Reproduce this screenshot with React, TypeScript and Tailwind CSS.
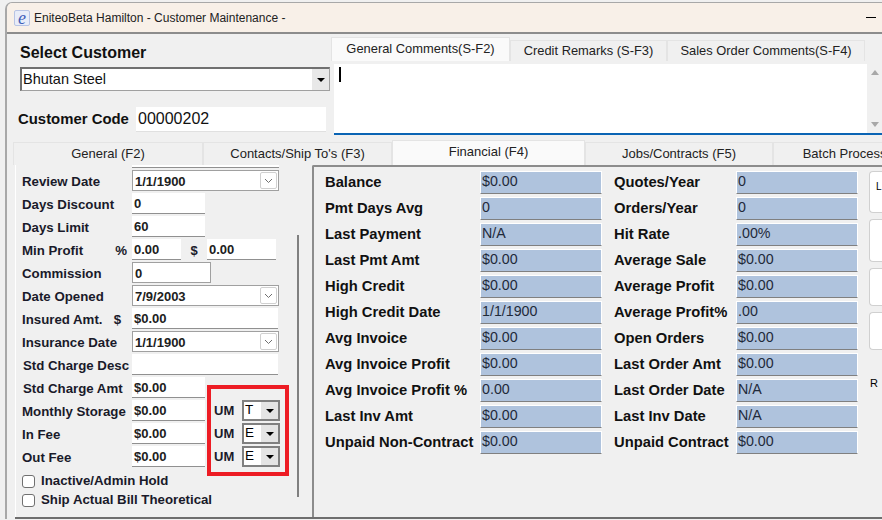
const sans = "font-['Liberation_Sans',Arial,sans-serif]";

function Caret({ className = "" }: { className?: string }) {
  return <div className={`h-0 w-0 border-x-[4px] border-t-[4px] border-x-transparent border-t-black ${className}`} />;
}

function DateBox({ value }: { value: string }) {
  return (
    <div className="flex h-[21px] w-[147px] items-center justify-between border border-[#a0a0a0] bg-white pl-[2px] pr-[1px] text-[13px] font-bold text-[#202020]">
      <span className="pt-[2px]">{value}</span>
      <div className="flex h-[17px] w-[17px] items-center justify-center rounded-[2px] border border-[#d0d0d0] bg-white">
        <svg width="9" height="6" viewBox="0 0 9 6"><path d="M1 1l3.5 3.5L8 1" fill="none" stroke="#707070" strokeWidth="1" /></svg>
      </div>
    </div>
  );
}

function TextBox({ value = "", w }: { value?: string; w: string }) {
  return (
    <div className={`flex h-[21px] items-center border-b border-[#909090] bg-white pl-[2px] pt-[2px] text-[13px] font-bold text-[#202020] ${w}`}>
      {value}
    </div>
  );
}

function Label({ children, indent = false }: { children: React.ReactNode; indent?: boolean }) {
  return (
    <span className={`whitespace-nowrap text-[13.25px] font-bold text-[#1a1a2a] ${indent ? "pl-[1px]" : ""}`}>{children}</span>
  );
}

function UM({ value }: { value: string }) {
  return (
    <div className="ml-[9px] flex items-center">
      <span className="w-[28px] text-[13px] font-bold text-[#1a1a2a]">UM</span>
      <div className="flex h-[21px] w-[38px] items-center justify-between border-2 border-[#808080] bg-white pl-[1px] text-[13.5px] text-black">
        <span>{value}</span>
        <div className="flex h-full w-[17px] items-center justify-center bg-[#e4e4e4]">
          <Caret />
        </div>
      </div>
    </div>
  );
}

const leftRows: { label: string; node: React.ReactNode }[] = [
  { label: "Review Date", node: <DateBox value="1/1/1900" /> },
  { label: "Days Discount", node: <TextBox value="0" w="w-[73px]" /> },
  { label: "Days Limit", node: <TextBox value="60" w="w-[73px]" /> },
];

const finLeft = [
  ["Balance", "$0.00"],
  ["Pmt Days Avg", "0"],
  ["Last Payment", "N/A"],
  ["Last Pmt Amt", "$0.00"],
  ["High Credit", "$0.00"],
  ["High Credit Date", "1/1/1900"],
  ["Avg Invoice", "$0.00"],
  ["Avg Invoice Profit", "$0.00"],
  ["Avg Invoice Profit %", "0.00"],
  ["Last Inv Amt", "$0.00"],
  ["Unpaid Non-Contract", "$0.00"],
];
const finRight = [
  ["Quotes/Year", "0"],
  ["Orders/Year", "0"],
  ["Hit Rate", ".00%"],
  ["Average Sale", "$0.00"],
  ["Average Profit", "$0.00"],
  ["Average Profit%", ".00"],
  ["Open Orders", "$0.00"],
  ["Last Order Amt", "$0.00"],
  ["Last Order Date", "N/A"],
  ["Last Inv Date", "N/A"],
  ["Unpaid Contract", "$0.00"],
];

function FinCol({ rows, labelW }: { rows: string[][]; labelW: string }) {
  return (
    <div className="flex flex-col gap-[4px]">
      {rows.map(([l, v]) => (
        <div key={l} className="flex h-[22px] items-center">
          <span className={`whitespace-nowrap text-[14.75px] font-bold text-[#111] ${labelW}`}>{l}</span>
          <div className="flex h-[23px] w-[122px] items-center border-y border-b-[#808080] border-t-white border-x border-x-white bg-[#afc3dd] pl-[1px] text-[14.25px] text-[#1f2a3a]">
            {v}
          </div>
        </div>
      ))}
    </div>
  );
}

function TopTab({ children, w, active = false }: { children: React.ReactNode; w: string; active?: boolean }) {
  return (
    <div
      className={`flex items-center justify-center whitespace-nowrap border border-b-0 border-[#e4e4e4] text-[12.9px] text-[#222] ${w} ${
        active ? "h-[24px] bg-[#fafafa] pb-[2px]" : "h-[21px] bg-[#f0f0f0]"
      }`}
    >
      {children}
    </div>
  );
}

function MainTab({ children, w, active = false }: { children: React.ReactNode; w: string; active?: boolean }) {
  return (
    <div
      className={`flex shrink-0 items-center justify-center whitespace-nowrap border border-b-0 border-[#e4e4e4] text-[13px] text-[#222] ${w} ${
        active ? "h-[25px] bg-[#fafafa] pb-[2px]" : "h-[23px] bg-[#f0f0f0]"
      }`}
    >
      {children}
    </div>
  );
}

export default function App() {
  return (
    <div className={`h-[520px] w-[882px] overflow-hidden bg-[#f0f0f0] pl-[5px] pt-[2px] ${sans}`}>
      <div className="flex h-[517px] flex-col overflow-hidden rounded-tl-[7px] border-l-2 border-t border-[#a8a8a8] bg-[#f0f0f0]">
        {/* title bar */}
        <div className="flex h-[31px] shrink-0 items-center justify-between border-b-2 border-[#8c8c8c] bg-[#f8f0e8] pl-[7px] pr-[6px]">
          <div className="flex items-center gap-[4px]">
            <div className="flex h-[16px] w-[16px] items-center justify-center rounded-[2px] border border-[#b8c4e4] bg-[#e8ecf8] font-['Liberation_Serif',serif] text-[18px] italic leading-none text-[#3f5fb8]">
              e
            </div>
            <span className="text-[12px] text-[#222]">EniteoBeta Hamilton - Customer Maintenance -</span>
          </div>
          <div className="h-[1px] w-[10px] bg-black" />
        </div>

        {/* header */}
        <div className="flex h-[105px] shrink-0">
          <div className="w-[324px] shrink-0 pl-[13px]">
            <div className="mt-[10px] text-[16px] font-bold leading-[18px] text-[#111]">Select Customer</div>
            <div className="mt-[5px] flex h-[24px] w-[310px] items-center justify-between border border-[#a0a0a0] border-l-2 border-t-2 border-l-[#707070] border-t-[#707070] bg-white pl-[1px] text-[14.5px] text-[#111]">
              <span>Bhutan Steel</span>
              <div className="flex h-full w-[17px] items-center justify-center bg-[#e8e8e8]">
                <Caret />
              </div>
            </div>
            <div className="mt-[16px] flex items-center">
              <span className="ml-[-2px] w-[118px] text-[14.9px] font-bold text-[#111]">Customer Code</span>
              <div className="flex h-[25px] w-[190px] items-center border-b border-[#e0e0e0] bg-white pl-[2px] text-[16px] text-[#111]">
                00000202
              </div>
            </div>
          </div>
          <div className="flex min-w-0 flex-1 flex-col pt-[3px]">
            <div className="flex items-end">
              <TopTab w="w-[179px]" active>General Comments(S-F2)</TopTab>
              <TopTab w="w-[157px]">Credit Remarks (S-F3)</TopTab>
              <TopTab w="w-[198px]">Sales Order Comments(S-F4)</TopTab>
            </div>
            <div className="ml-[3px] mt-[3px] flex h-[71px] justify-between border-b-2 border-[#0a64b4] bg-white">
              <div className="ml-[5px] mt-[3px] h-[15px] w-[2px] bg-black" />
              <div className="flex w-[15px] flex-col items-center justify-between bg-[#f0f0f0] py-[6px]">
                <div className="h-0 w-0 border-x-[4px] border-b-[5px] border-x-transparent border-b-[#a8a8a8]" />
                <div className="h-0 w-0 border-x-[4px] border-t-[5px] border-x-transparent border-t-[#a8a8a8]" />
              </div>
            </div>
          </div>
        </div>

        {/* main tabs */}
        <div className="flex h-[26px] shrink-0 items-end overflow-hidden pl-[6px]">
          <MainTab w="w-[190px]">General (F2)</MainTab>
          <MainTab w="w-[189px]">Contacts/Ship To's (F3)</MainTab>
          <MainTab w="w-[193px]" active>Financial (F4)</MainTab>
          <MainTab w="w-[188px]">Jobs/Contracts (F5)</MainTab>
          <MainTab w="w-[188px]">Batch Processing (F6)</MainTab>
        </div>

        {/* body */}
        <div className="ml-[8px] flex min-h-0 flex-1 border-b-2 border-[#6e6e6e]">
          {/* left panel */}
          <div className="relative w-[276px] shrink-0 border-l border-white pl-[6px]">
            <div className="absolute left-[116px] top-0 h-[3px] w-[147px] border-b border-[#909090] bg-white" />
            <div className="flex flex-col gap-[2px] pt-[5px]">
              {leftRows.map((r) => (
                <div key={r.label} className="flex h-[21px] items-center">
                  <span className="w-[110px]"><Label>{r.label}</Label></span>
                  {r.node}
                </div>
              ))}
              <div className="flex h-[21px] items-center">
                <span className="flex w-[110px] justify-between pr-[5px] pt-[2px]"><Label>Min Profit</Label><Label>%</Label></span>
                <TextBox value="0.00" w="w-[49px]" />
                <span className="w-[26px] pt-[2px] text-center text-[13px] font-bold text-[#1a1a2a]">$</span>
                <TextBox value="0.00" w="w-[69px]" />
              </div>
              <div className="flex h-[21px] items-center">
                <span className="w-[110px]"><Label>Commission</Label></span>
                <div className="flex h-[21px] w-[79px] items-center border border-[#a0a0a0] bg-white pl-[2px] pt-[2px] text-[13px] font-bold text-[#202020]">0</div>
              </div>
              <div className="flex h-[21px] items-center">
                <span className="w-[110px]"><Label>Date Opened</Label></span>
                <DateBox value="7/9/2003" />
              </div>
              <div className="flex h-[21px] items-center">
                <span className="flex w-[110px] justify-between pr-[11px] pt-[2px]"><Label>Insured Amt.</Label><Label>$</Label></span>
                <TextBox value="$0.00" w="w-[146px]" />
              </div>
              <div className="flex h-[21px] items-center">
                <span className="w-[110px]"><Label>Insurance Date</Label></span>
                <DateBox value="1/1/1900" />
              </div>
              <div className="flex h-[21px] items-center">
                <span className="w-[110px]"><Label indent>Std Charge Desc</Label></span>
                <TextBox w="w-[146px]" />
              </div>
              <div className="flex h-[21px] items-center">
                <span className="w-[110px]"><Label indent>Std Charge Amt</Label></span>
                <TextBox value="$0.00" w="w-[73px]" />
              </div>
              {[["Monthly Storage", "T"], ["In Fee", "E"], ["Out Fee", "E"]].map(([l, u]) => (
                <div key={l} className="flex h-[21px] items-center">
                  <span className="w-[110px]"><Label>{l}</Label></span>
                  <TextBox value="$0.00" w="w-[73px]" />
                  <UM value={u} />
                </div>
              ))}
            </div>
            <div className="mt-[7px] flex flex-col gap-[5px]">
              {["Inactive/Admin Hold", "Ship Actual Bill Theoretical"].map((t) => (
                <label key={t} className="flex h-[14px] items-center gap-[6px]">
                  <span className="h-[13px] w-[13px] rounded-[3px] border border-[#707070] bg-white" />
                  <Label>{t}</Label>
                </label>
              ))}
            </div>
            {/* annotation */}
            <div className="absolute left-[191px] top-[220px] h-[91px] w-[82px] border-[4px] border-[#ed1c24]" />
            {/* scrollbar line */}
            <div className="absolute left-[281px] top-[70px] h-[262px] w-[2px] bg-[#808080]" />
          </div>

          {/* financial panel */}
          <div className="ml-[21px] flex min-w-0 flex-1 rounded-tl-[2px] border-l-2 border-t-2 border-[#8c8c8c] pb-[4px] pl-[11px] pt-[4px]">
            <div className="flex h-[340px] gap-[12px]">
              <FinCol rows={finLeft} labelW="w-[155px]" />
              <FinCol rows={finRight} labelW="w-[122px]" />
            </div>
            <div className="ml-[11px] flex flex-1 flex-col">
              <div className="flex h-[42px] rounded-l-[4px] border border-r-0 border-[#d0d0d0] bg-white pl-[6px] pt-[7px] text-[10px]">L</div>
              <div className="mt-[6px] h-[43px] rounded-l-[4px] border border-r-0 border-[#d0d0d0] bg-white" />
              <div className="mt-[6px] h-[38px] rounded-l-[4px] border border-r-0 border-[#d0d0d0] bg-white" />
              <div className="mt-[6px] h-[38px] rounded-l-[4px] border border-r-0 border-[#d0d0d0] bg-white" />
              <div className="mt-[25px] pl-[1px] text-[11px]">R</div>
            </div>
          </div>
        </div>
      </div>
    </div>
  );
}
